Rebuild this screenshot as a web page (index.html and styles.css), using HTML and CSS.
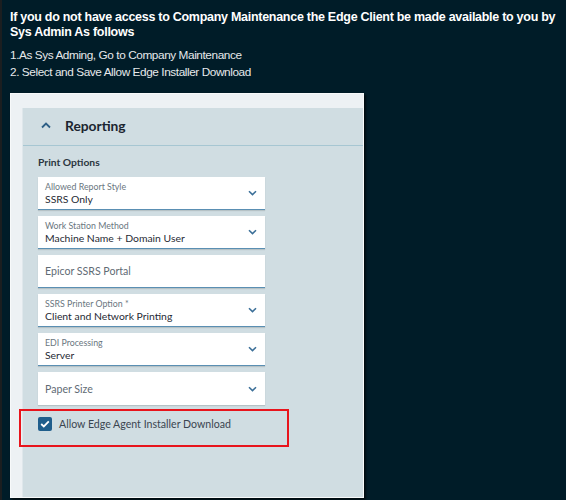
FILE: index.html
```html
<!DOCTYPE html>
<html>
<head>
<meta charset="utf-8">
<link rel="stylesheet" href="styles.css">
</head>
<body>
<div class="page">
  <p class="lead">If you do not have access to Company Maintenance the Edge Client be made available to you by Sys Admin As follows</p>
  <div class="steps">
    <div>1.As Sys Adming, Go to Company Maintenance</div>
    <div>2. Select and Save Allow Edge Installer Download</div>
  </div>
  <div class="shot">
    <div class="panel">
      <div class="panel-head">
        <svg class="chev-up" width="10" height="7" viewBox="0 0 10 7"><path d="M1 5.5 L5 1.5 L9 5.5" fill="none" stroke="#2d5f86" stroke-width="1.8"/></svg>
        <span class="title">Reporting</span>
      </div>
      <div class="panel-body">
        <div class="group">Print Options</div>
        <div class="fields">
          <div class="field">
            <div class="text"><span class="lbl">Allowed Report Style</span><span class="val">SSRS Only</span></div>
            <svg class="chev" width="9" height="6" viewBox="0 0 9 6"><path d="M1 1.2 L4.5 4.6 L8 1.2" fill="none" stroke="#3b6f98" stroke-width="1.6"/></svg>
          </div>
          <div class="field">
            <div class="text"><span class="lbl">Work Station Method</span><span class="val">Machine Name + Domain User</span></div>
            <svg class="chev" width="9" height="6" viewBox="0 0 9 6"><path d="M1 1.2 L4.5 4.6 L8 1.2" fill="none" stroke="#3b6f98" stroke-width="1.6"/></svg>
          </div>
          <div class="field">
            <div class="text"><span class="ph">Epicor SSRS Portal</span></div>
          </div>
          <div class="field">
            <div class="text"><span class="lbl">SSRS Printer Option *</span><span class="val">Client and Network Printing</span></div>
            <svg class="chev" width="9" height="6" viewBox="0 0 9 6"><path d="M1 1.2 L4.5 4.6 L8 1.2" fill="none" stroke="#3b6f98" stroke-width="1.6"/></svg>
          </div>
          <div class="field">
            <div class="text"><span class="lbl">EDI Processing</span><span class="val">Server</span></div>
            <svg class="chev" width="9" height="6" viewBox="0 0 9 6"><path d="M1 1.2 L4.5 4.6 L8 1.2" fill="none" stroke="#3b6f98" stroke-width="1.6"/></svg>
          </div>
          <div class="field plain">
            <div class="text"><span class="ph">Paper Size</span></div>
            <svg class="chev" width="9" height="6" viewBox="0 0 9 6"><path d="M1 1.2 L4.5 4.6 L8 1.2" fill="none" stroke="#3b6f98" stroke-width="1.6"/></svg>
          </div>
        </div>
        <div class="check-row">
          <span class="box"><svg width="10" height="8" viewBox="0 0 10 8"><path d="M1.2 4 L3.8 6.4 L8.8 1.4" fill="none" stroke="#fff" stroke-width="1.8"/></svg></span>
          <span class="check-label">Allow Edge Agent Installer Download</span>
        </div>
      </div>
    </div>
  </div>
</div>
</body>
</html>
```
FILE: styles.css
```css
html, body {
  margin: 0;
  padding: 0;
  background: #001c28;
}
.page {
  padding: 10px 0 0 8px;
  height: 490px;
  overflow: hidden;
  border-left: 2px solid #1b1e20;
}
.lead {
  margin: 0;
  font-family: "Liberation Sans", Arial, sans-serif;
  font-weight: bold;
  font-size: 12.5px;
  letter-spacing: -0.28px;
  line-height: 15px;
  color: #ffffff;
  width: 556px;
}
.steps {
  margin: 7px 0 0 0;
  font-family: "Liberation Sans", Arial, sans-serif;
  font-size: 11.8px;
  letter-spacing: -0.42px;
  line-height: 17px;
  color: #e6e9eb;
}
.shot {
  margin-top: 12px;
  width: 354px;
  height: 405px;
  background: #edf1f4;
  border: 1px solid #f7f9fa;
  box-shadow: 2px 2px 2px rgba(0,0,0,0.6);
  padding: 14px 0 0 11px;
  box-sizing: border-box;
  display: flex;
}
.panel {
  flex: 1;
  background: #d0dde2;
  border-left: 1px solid #dfe7eb;
  font-family: Lato, "Noto Sans", sans-serif;
}
.panel-head {
  height: 38px;
  border-bottom: 1px solid #a6c6d2;
  box-sizing: border-box;
  display: flex;
  align-items: center;
  padding: 0 0 3px 18px;
}
.chev-up { margin-right: 14px; }
.title {
  font-size: 13.8px;
  font-weight: bold;
  color: #1b2530;
}
.panel-body {
  padding: 8px 0 0 15px;
}
.group {
  font-size: 10.3px;
  font-weight: bold;
  color: #2b3640;
  line-height: 16px;
  margin-bottom: 7px;
}
.fields {
  display: flex;
  flex-direction: column;
  gap: 6px;
  width: 227px;
}
.field {
  height: 33px;
  box-sizing: border-box;
  background: #ffffff;
  border-bottom: 1.5px solid #5a8fb3;
  box-shadow: 0 1px 1px rgba(0,0,0,0.12);
  display: flex;
  align-items: center;
  padding: 0 8px 0 7px;
}
.field.plain { border-bottom: none; }
.text {
  flex: 1;
  display: flex;
  flex-direction: column;
}
.lbl {
  font-size: 8.8px;
  line-height: 11px;
  color: #6a7680;
}
.val {
  font-size: 10.4px;
  line-height: 14px;
  color: #1f2a34;
}
.ph {
  font-size: 10.6px;
  color: #5f6b75;
}
.check-row {
  margin: 4px 0 0 -19px;
  width: 270px;
  height: 38px;
  box-sizing: border-box;
  border: 2px solid #e8141c;
  display: flex;
  align-items: flex-start;
  padding: 6px 0 0 17px;
}
.box {
  width: 14px;
  height: 14px;
  background: #1f5e8c;
  border-radius: 2px;
  display: flex;
  align-items: center;
  justify-content: center;
  margin-right: 7px;
}
.check-label {
  font-size: 10.6px;
  line-height: 14px;
  color: #3a4550;
}
```
